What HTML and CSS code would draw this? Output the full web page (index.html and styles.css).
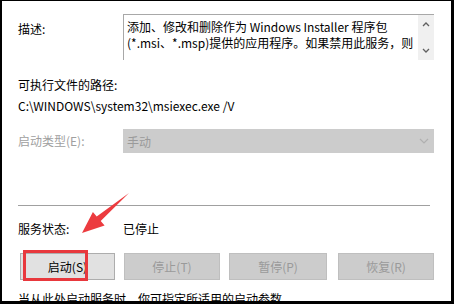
FILE: index.html
```html
<!DOCTYPE html>
<html lang="zh-CN">
<head>
    <meta charset="UTF-8">
    <meta name="viewport" content="width=device-width, initial-scale=1.0">
    <title>服务属性</title>
    <link rel="stylesheet" href="styles.css">
</head>
<body>
    <div class="frame">
        <div class="row-desc">
            <div class="label label-desc">描述:</div>
            <div class="textbox">
                <div class="textbox-text">
                    <div>添加、修改和删除作为 Windows Installer 程序包</div>
                    <div>(*.msi、*.msp)提供的应用程序。如果禁用此服务，则</div>
                </div>
                <div class="scrollbar">
                    <svg width="8" height="6" viewBox="0 0 8 6"><path d="M1 5 L4 2 L7 5" fill="none" stroke="#606060" stroke-width="1.3"/></svg>
                    <svg width="8" height="6" viewBox="0 0 8 6"><path d="M1 1 L4 4 L7 1" fill="none" stroke="#606060" stroke-width="1.3"/></svg>
                </div>
            </div>
        </div>

        <div class="label path-label">可执行文件的路径:</div>
        <div class="label path-value">C:\WINDOWS\system32\msiexec.exe /V</div>

        <div class="row-type">
            <div class="label disabled">启动类型(E):</div>
            <div class="dropdown">
                <span>手动</span>
                <svg width="10" height="6" viewBox="0 0 10 6"><path d="M1 1 L5 5 L9 1" fill="none" stroke="#b0b0b0" stroke-width="1.2"/></svg>
            </div>
        </div>

        <div class="separator"></div>

        <div class="row-status">
            <div class="label">服务状态:</div>
            <div class="label">已停止</div>
        </div>

        <div class="buttons">
            <button class="btn btn-start">启动(S)</button>
            <button class="btn btn-off btn-stop">停止(T)</button>
            <button class="btn btn-off btn-pause">暂停(P)</button>
            <button class="btn btn-off btn-resume">恢复(R)</button>
        </div>

        <div class="label hint">当从此处启动服务时，你可指定所适用的启动参数。</div>

        <!-- red annotation drawn on top of the dialog -->
        <svg class="annotation" width="454" height="304" viewBox="0 0 454 304">
            <rect x="24.5" y="251.5" width="62" height="28" fill="none" stroke="#e8383d" stroke-width="3"/>
            <polygon points="129,193 100.7,221 104.6,225.5 82,233 92.9,211.9 96.7,216.4" fill="#ec3b3f"/>
        </svg>
    </div>
</body>
</html>
```

FILE: styles.css
```css
/* Page */
body {
    margin: 0;
    padding: 0;
    font-family: "Noto Sans CJK SC", "Noto Sans", sans-serif;
    font-size: 12px;
    color: #000;
    background-color: #000;
}

/* Dialog area with the black screenshot edge */
.frame {
    position: relative;
    width: 454px;
    height: 304px;
    box-sizing: border-box;
    border-style: solid;
    border-color: #000;
    border-width: 1px 3px 3px 2px;
    background-color: #fff;
    padding: 13px 0 0 16px;
    overflow: hidden;
}

.label {
    line-height: 16px;
    white-space: nowrap;
}

.disabled {
    color: #a0a0a0;
}

/* Description */
.row-desc {
    display: grid;
    grid-template-columns: 105px 311px;
    height: 46px;
}

.label-desc {
    padding-top: 7px;
}

.textbox {
    display: flex;
    border-top: 1px solid #a8a8a8;
    border-left: 1px solid #a8a8a8;
    overflow: hidden;
}

.textbox-text {
    flex: 1;
    padding: 4px 0 0 3px;
    line-height: 16px;
    white-space: nowrap;
    overflow: hidden;
}

.scrollbar {
    width: 16px;
    background-color: #f0f0f0;
    display: flex;
    flex-direction: column;
    align-items: center;
    justify-content: space-between;
    padding: 6px 0 6px;
}

/* Executable path */
.path-label {
    margin-top: 17px;
}

.path-value {
    margin-top: 5px;
}

/* Startup type */
.row-type {
    display: grid;
    grid-template-columns: 105px 311px;
    align-items: center;
    margin-top: 15px;
}

.dropdown {
    height: 24px;
    background-color: #cccccc;
    color: #9a9a9a;
    display: flex;
    align-items: center;
    justify-content: space-between;
    padding: 0 5px 0 4px;
    box-sizing: border-box;
}

.separator {
    width: 412px;
    height: 1px;
    background-color: #a0a0a0;
    margin-top: 52px;
}

/* Service status */
.row-status {
    display: grid;
    grid-template-columns: 105px auto;
    margin-top: 15px;
}

/* Buttons */
.buttons {
    display: flex;
    margin: 16px 0 0 2px;
}

.btn {
    height: 27px;
    font-family: inherit;
    font-size: 12px;
    padding: 0;
    border: 1px solid #adadad;
    background-color: #e1e1e1;
    color: #000;
}

.btn-start {
    width: 95px;
}

.btn-off {
    background-color: #cccccc;
    border-color: #bfbfbf;
    color: #9a9a9a;
}

.btn-stop {
    width: 96px;
    margin-left: 9px;
}

.btn-pause {
    width: 98px;
    margin-left: 9px;
}

.btn-resume {
    width: 96px;
    margin-left: 11px;
}

.hint {
    margin-top: 11px;
}

/* Red arrow and box */
.annotation {
    position: absolute;
    left: -2px;
    top: -1px;
}
```
